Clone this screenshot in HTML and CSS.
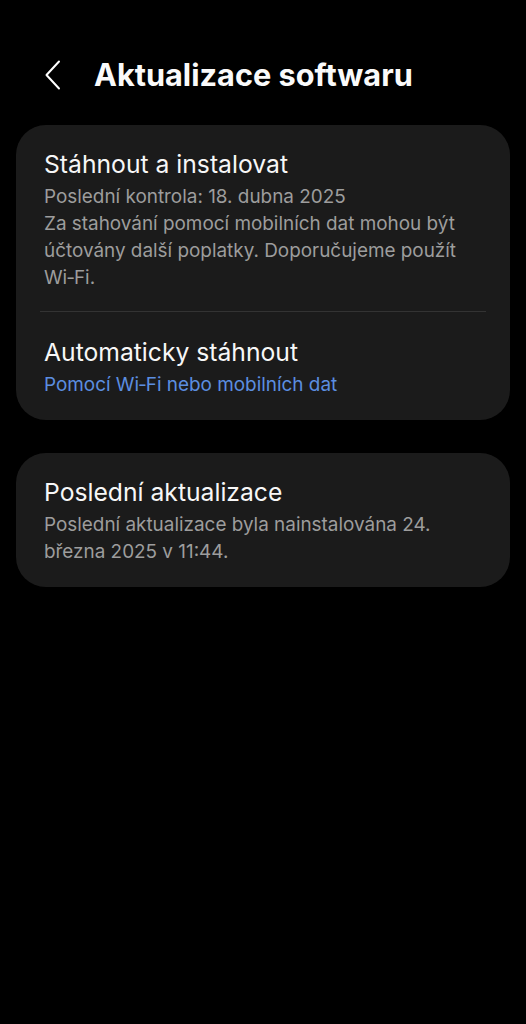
FILE: index.html
```html
<!DOCTYPE html>
<html lang="cs">
<head>
<meta charset="utf-8">
<link rel="stylesheet" href="styles.css">
</head>
<body>
<header class="topbar">
  <span class="back">
    <svg width="18" height="30" viewBox="0 0 18 30"><path d="M15 1.5 L2.5 15 L15 28.5" fill="none" stroke="#fff" stroke-width="2" stroke-linecap="round" stroke-linejoin="round"/></svg>
  </span>
  <h1 class="title">Aktualizace softwaru</h1>
</header>
<main class="content">
  <section class="card">
    <div class="item">
      <div class="item-title">Stáhnout a instalovat</div>
      <div class="item-sub">Poslední kontrola: 18. dubna 2025<br>Za stahování pomocí mobilních dat mohou být účtovány další poplatky. Doporučujeme použít Wi&#8209;Fi.</div>
    </div>
    <div class="sep"></div>
    <div class="item">
      <div class="item-title">Automaticky stáhnout</div>
      <div class="item-sub blue">Pomocí Wi&#8209;Fi nebo mobilních dat</div>
    </div>
  </section>
  <section class="card">
    <div class="item">
      <div class="item-title">Poslední aktualizace</div>
      <div class="item-sub">Poslední aktualizace byla nainstalována 24. března 2025 v 11:44.</div>
    </div>
  </section>
</main>
</body>
</html>
```
FILE: styles.css
```css
html, body {
  margin: 0;
  padding: 0;
  background: #000;
  height: 100%;
}
body {
  font-family: Inter, "Noto Sans", sans-serif;
  color: #fafafa;
}
.topbar {
  display: flex;
  align-items: center;
  height: 40px;
  margin-top: 55px;
  padding-left: 44px;
}
.back {
  display: flex;
  width: 50px;
}
.title {
  margin: 0;
  font-size: 30.7px;
  font-weight: 700;
  line-height: 40px;
}
.content {
  padding: 30px 16px 0;
  display: flex;
  flex-direction: column;
  gap: 33px;
}
.card {
  background: #1b1b1b;
  border-radius: 30px;
  padding: 23px 0 22px;
}
.item {
  padding: 0 24px 0 28px;
}
.item-title {
  font-size: 24.7px;
  line-height: 32px;
  margin-bottom: 3px;
  color: #f7f7f7;
}
.item-sub {
  font-size: 18.9px;
  line-height: 27px;
  color: #9d9d9d;
}
.item-sub.blue {
  color: #5c8ee0;
}
.sep {
  height: 1px;
  background: #333;
  margin: 20px 24px 24px;
}
```
